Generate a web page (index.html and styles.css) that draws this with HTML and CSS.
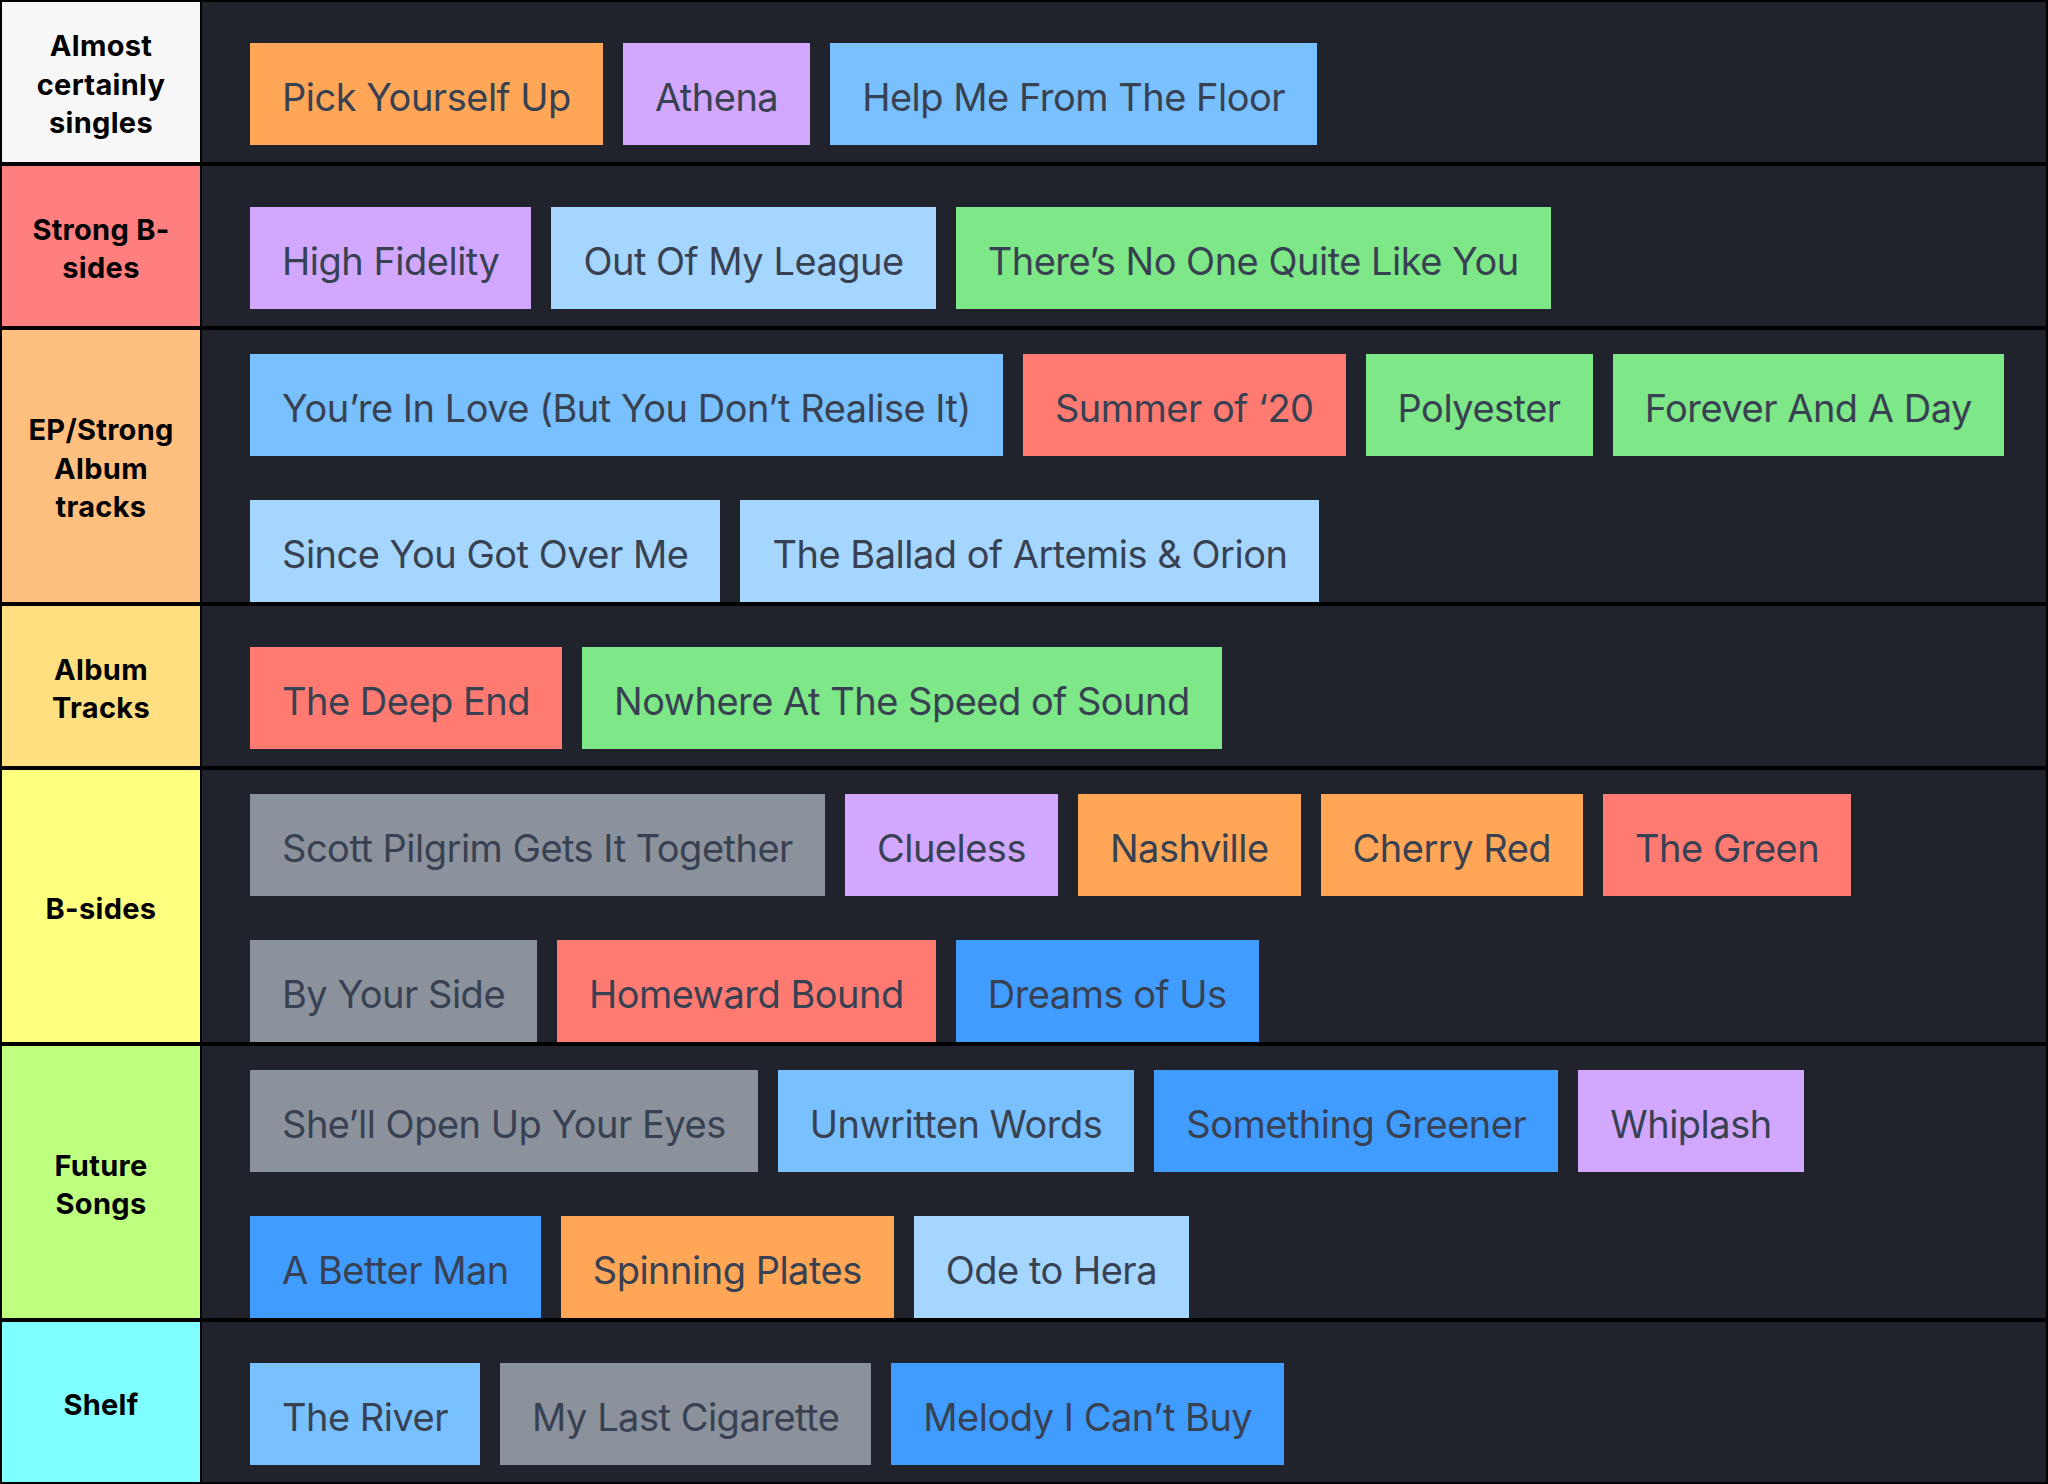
FILE: index.html
```html
<!DOCTYPE html>
<html lang="en">
<head>
<meta charset="utf-8">
<title>Tier list</title>
<link rel="stylesheet" href="styles.css">
</head>
<body>
<div class="tierlist">
  <div class="tier">
    <div class="label label-white">Almost certainly singles</div>
    <div class="items">
      <div class="chip orange">Pick Yourself Up</div>
      <div class="chip purple">Athena</div>
      <div class="chip blue">Help Me From The Floor</div>
    </div>
  </div>
  <div class="tier">
    <div class="label label-red">Strong B-sides</div>
    <div class="items">
      <div class="chip purple">High Fidelity</div>
      <div class="chip light">Out Of My League</div>
      <div class="chip green">There’s No One Quite Like You</div>
    </div>
  </div>
  <div class="tier">
    <div class="label label-orange">EP/Strong Album tracks</div>
    <div class="items">
      <div class="chip blue">You’re In Love (But You Don’t Realise It)</div>
      <div class="chip red">Summer of ‘20</div>
      <div class="chip green">Polyester</div>
      <div class="chip green">Forever And A Day</div>
      <div class="chip light">Since You Got Over Me</div>
      <div class="chip light">The Ballad of Artemis &amp; Orion</div>
    </div>
  </div>
  <div class="tier">
    <div class="label label-amber">Album Tracks</div>
    <div class="items">
      <div class="chip red">The Deep End</div>
      <div class="chip green">Nowhere At The Speed of Sound</div>
    </div>
  </div>
  <div class="tier">
    <div class="label label-yellow">B-sides</div>
    <div class="items">
      <div class="chip gray">Scott Pilgrim Gets It Together</div>
      <div class="chip purple">Clueless</div>
      <div class="chip orange">Nashville</div>
      <div class="chip orange">Cherry Red</div>
      <div class="chip red">The Green</div>
      <div class="chip gray">By Your Side</div>
      <div class="chip red">Homeward Bound</div>
      <div class="chip deep">Dreams of Us</div>
    </div>
  </div>
  <div class="tier">
    <div class="label label-lime">Future Songs</div>
    <div class="items">
      <div class="chip gray">She’ll Open Up Your Eyes</div>
      <div class="chip blue">Unwritten Words</div>
      <div class="chip deep">Something Greener</div>
      <div class="chip purple">Whiplash</div>
      <div class="chip deep">A Better Man</div>
      <div class="chip orange">Spinning Plates</div>
      <div class="chip light">Ode to Hera</div>
    </div>
  </div>
  <div class="tier">
    <div class="label label-cyan">Shelf</div>
    <div class="items">
      <div class="chip blue">The River</div>
      <div class="chip gray">My Last Cigarette</div>
      <div class="chip deep">Melody I Can’t Buy</div>
    </div>
  </div>
</div>
</body>
</html>
```

FILE: styles.css
```css
* { box-sizing: border-box; }
html, body { margin: 0; padding: 0; background: #000; }
body { font-family: Inter, "Noto Sans", "Liberation Sans", sans-serif; }

.tierlist {
  background: #000;
  padding: 2px;
  display: flex;
  flex-direction: column;
  gap: 4px;
  width: 2048px;
  min-height: 1484px;
}

.tier {
  display: flex;
  gap: 2px;
}

.label {
  flex: 0 0 198px;
  display: flex;
  align-items: center;
  justify-content: center;
  text-align: center;
  padding: 6px 14px 0;
  font-weight: 700;
  font-size: 29px;
  line-height: 38.5px;
  letter-spacing: 0.3px;
  color: #000;
}

.label-white { background: #f7f7f7; }
.label-red { background: #ff7f7f; }
.label-orange { background: #ffbf7f; }
.label-amber { background: #ffdf7f; }
.label-yellow { background: #ffff7f; }
.label-lime { background: #bfff7f; }
.label-cyan { background: #7fffff; }

.items {
  flex: 1;
  background: #20232b;
  min-height: 160px;
  padding: 24px 20px 0 48px;
  display: flex;
  flex-wrap: wrap;
  align-content: center;
  column-gap: 20px;
  row-gap: 44px;
}

.chip {
  height: 102px;
  padding: 6px 32px 0;
  display: flex;
  align-items: center;
  font-size: 38px;
  letter-spacing: -0.5px;
  color: #384152;
  white-space: nowrap;
}

.orange { background: #ffa657; }
.purple { background: #d2a8ff; }
.blue { background: #79c0ff; }
.light { background: #a5d6ff; }
.green { background: #7ee787; }
.red { background: #ff7b72; }
.gray { background: #8b929c; }
.deep { background: #409cff; }
```
